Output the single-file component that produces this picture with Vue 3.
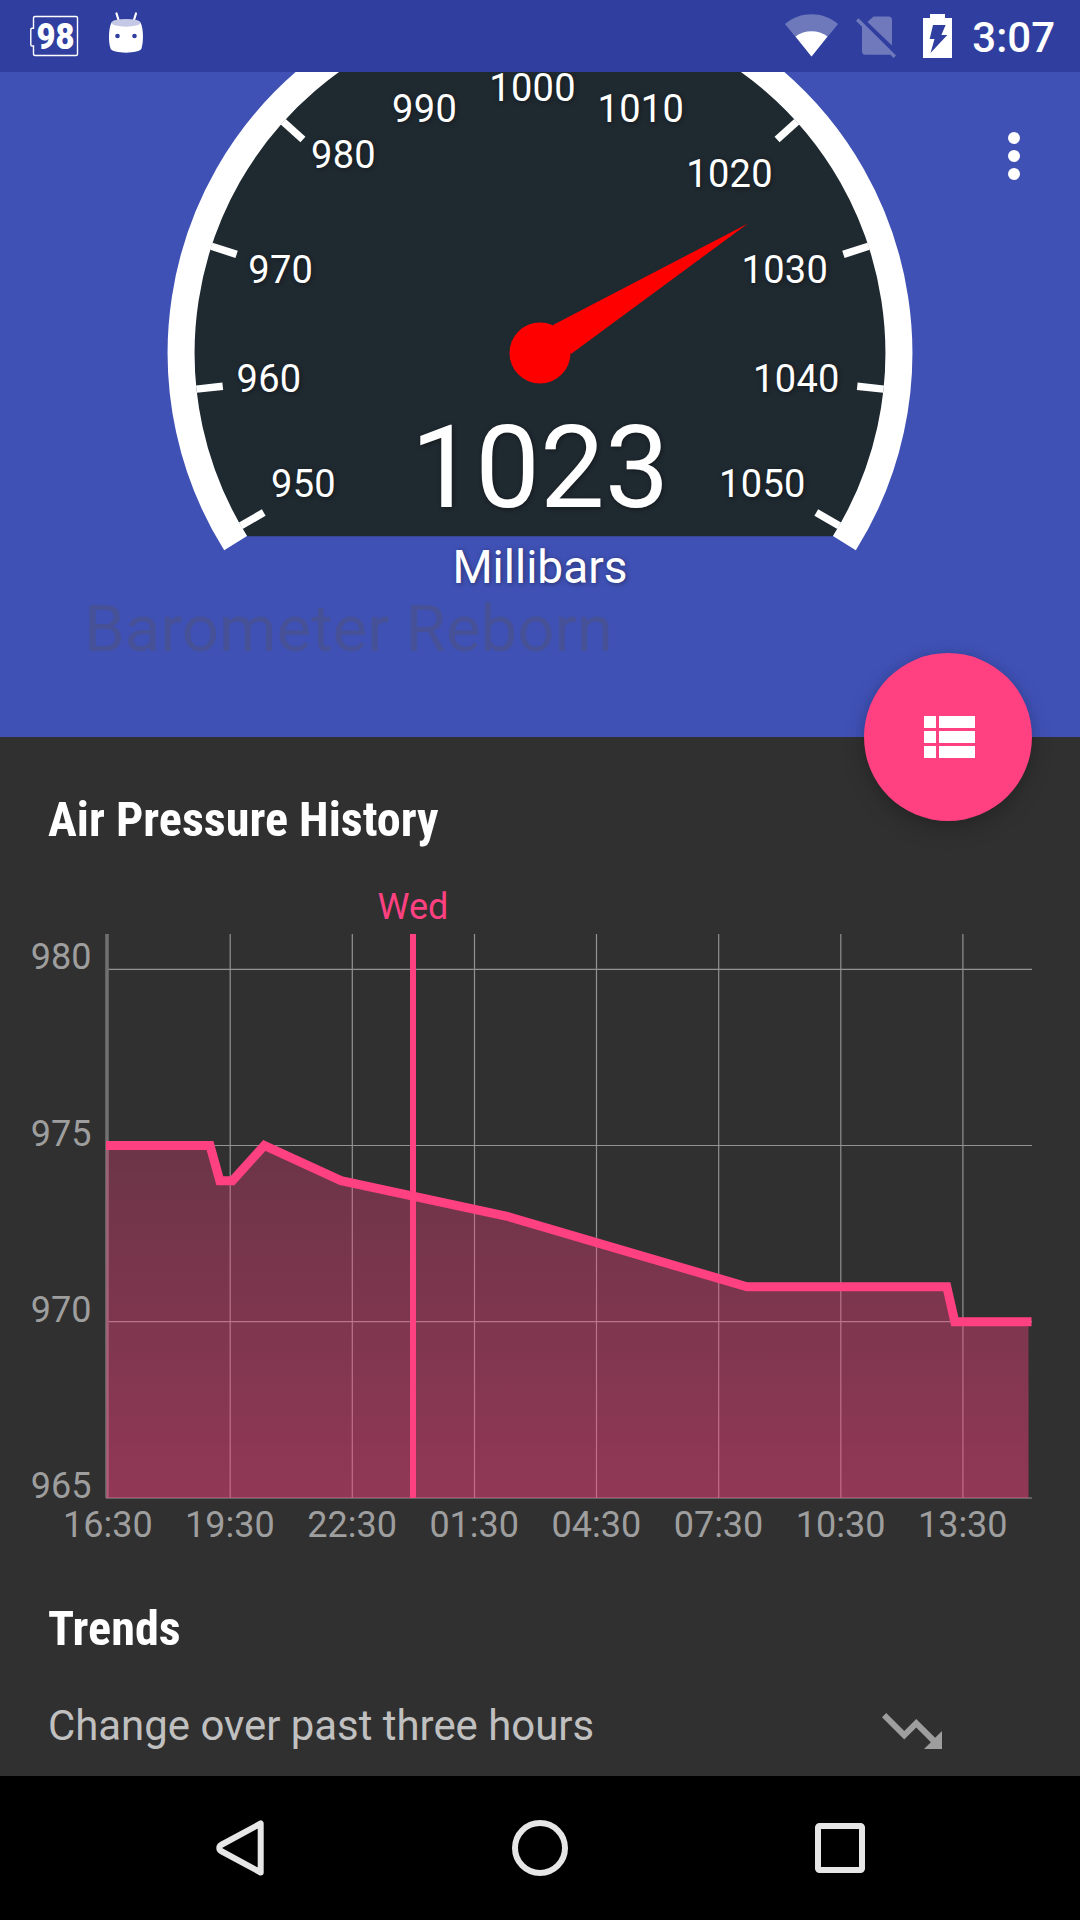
<template>
  <div class="screen">
    <header class="status-bar">
      <div class="status-left">
        <svg class="battery-count" width="52" height="44" viewBox="29 14 52 44">
          <path d="M35 16.5h41a1.5 1.5 0 0 1 1.500 1.500v36a1.500 1.500 0 0 1-1.500 1.500h-41a1.500 1.500 0 0 1-1.500-1.500v-8h-1.500a1.200 1.200 0 0 1-1.200-1.200v-15.300a1.200 1.200 0 0 1 1.200-1.200h1.500v-10.300a1.500 1.500 0 0 1 1.500-1.500z" />
          <text x="55.5" y="49" text-anchor="middle" textLength="38" lengthAdjust="spacingAndGlyphs">98</text>
        </svg>
        <svg width="36" height="44" viewBox="108 11 36 44">
          <path d="M116.500 13.500l2.500 8M136 13.500l-2.500 8" stroke="#fff" stroke-width="2.200" stroke-linecap="round" />
          <path d="M111.500 22.500c-3 6-3.300 19-1 26 1.500 5.500 29.500 5.500 31 0 2.300-7 2-20-1-26z" fill="#fff" />
          <ellipse cx="126" cy="22.800" rx="14.500" ry="3.900" fill="#c5c9e6" />
          <circle cx="117.500" cy="36" r="2.300" fill="#303f9f" />
          <circle cx="134.500" cy="36" r="2.300" fill="#303f9f" />
        </svg>
      </div>
      <div class="status-right">
        <svg width="170" height="60" viewBox="784 6 170 60">
          <path d="M811.500 56.500L785 24c15-13 38-13 53 0z" fill="#fff" opacity=".3" />
          <path d="M811.500 56.500L795.500 36.500c9-7 23-7 32 0z" fill="#fff" />
          <g fill="#fff" opacity=".3">
            <path d="M867.500 22l6-5.500H888.500a3.500 3.500 0 0 1 3.500 3.500V45.500z" />
            <path d="M858.500 18.300l37.500 37.200-2.400 2.400-3.200-3.200H865.500a3.500 3.500 0 0 1-3.500-3.500V26.800l-6-6z" />
          </g>
          <path
            d="M930 14h15v4h7v40h-29v-40h7zM933 25l-3.300 14h4.800L930.500 53 947.300 35h-5.900l4.200-10z"
            fill="#fff"
            fill-rule="evenodd"
          />
        </svg>
        <span class="clock">3:07</span>
      </div>
    </header>

    <section class="app-header">
      <svg class="gauge" width="1080" height="665" viewBox="0 72 1080 665">
        <path :d="dialPath" fill="#1f2930" />
        <path :d="ringPath" fill="none" stroke="#fff" stroke-width="27" />
        <line
          v-for="t in ticks"
          :key="t.angle"
          :x1="t.x1" :y1="t.y1" :x2="t.x2" :y2="t.y2"
          stroke="#fff"
          stroke-width="7.500"
        />
        <text v-for="l in labels" :key="l.text" class="tick-label" :x="l.x" :y="l.y">{{ l.text }}</text>
        <polygon points="553,325 748,223.500 571,354" fill="#f00" />
        <circle cx="540" cy="353" r="30.500" fill="#f00" />
        <text class="reading" x="540" y="507">1023</text>
        <text class="unit" x="540" y="583">Millibars</text>
        <text class="app-title" x="84" y="651">Barometer Reborn</text>
      </svg>
      <button class="overflow" aria-label="More options">
        <i></i><i></i><i></i>
      </button>
      <button class="fab" aria-label="List">
        <svg width="51" height="42" viewBox="0 0 51 42">
          <path d="M0 0h12v12H0zM15 0h36v12H15zM0 15h12v12H0zM15 15h36v12H15zM0 30h12v12H0zM15 30h36v12H15z" fill="#fff" />
        </svg>
      </button>
    </section>

    <main class="content">
      <h2>Air Pressure History</h2>
      <svg class="chart" width="1080" height="700" viewBox="0 870 1080 700">
        <defs>
          <linearGradient id="area" gradientUnits="userSpaceOnUse" x1="0" y1="934" x2="0" y2="1498">
            <stop offset="0" stop-color="#ff4081" stop-opacity=".18" />
            <stop offset="1" stop-color="#ff4081" stop-opacity=".47" />
          </linearGradient>
        </defs>
        <g stroke="#929292" stroke-width="1.200">
          <line v-for="x in gridX" :key="x" :x1="x" :x2="x" y1="934" y2="1498" />
          <line v-for="y in gridY" :key="y.label" x1="106" x2="1032" :y1="y.pos" :y2="y.pos" />
        </g>
        <line x1="107" x2="107" y1="934" y2="1498" stroke="#707070" stroke-width="3.600" />
        <polygon :points="`106.500,1498 ${line} 1028.500,1321.700 1028.500,1498`" fill="url(#area)" />
        <line x1="413" x2="413" y1="934" y2="1498" stroke="#ff4081" stroke-width="6" />
        <polyline :points="`${line} 1031.500,1321.700`" fill="none" stroke="#ff4081" stroke-width="9" />
        <text class="day" x="413" y="919">Wed</text>
        <text v-for="y in gridY" :key="y.label" class="axis end" x="91.5" :y="y.base">{{ y.label }}</text>
        <text v-for="(t, i) in times" :key="t" class="axis mid" :x="107.8 + i * 122.14" y="1537">{{ t }}</text>
      </svg>
      <h2>Trends</h2>
      <div class="trend-row">
        <span>Change over past three hours</span>
        <svg width="72" height="72" viewBox="0 0 24 24">
          <path d="M16 18l2.290-2.290-4.880-4.880-4 4L2 7.410 3.410 6l6 6 4-4 6.300 6.290L22 12v6z" fill="#9e9e9e" />
        </svg>
      </div>
    </main>

    <nav class="nav-bar">
      <svg width="60" height="60" viewBox="0 0 60 60">
        <path d="M50.700 5.500v49L11 33a3.500 3.500 0 0 1 0-6z" />
      </svg>
      <svg width="60" height="60" viewBox="0 0 60 60">
        <circle cx="30" cy="30" r="25" />
      </svg>
      <svg width="60" height="60" viewBox="0 0 60 60">
        <rect x="8" y="8" width="44" height="44" rx="1.500" />
      </svg>
    </nav>
  </div>
</template>

<script setup>
const cx = 540
const cy = 353

function polar(r, deg) {
  const a = (deg * Math.PI) / 180
  return [cx + r * Math.cos(a), cy + r * Math.sin(a)]
}

// dial opens downwards, leaving out the bottom 116 degrees
function arc(r) {
  return `M${polar(r, 148).join(' ')}A${r} ${r} 0 1 1 ${polar(r, 32).join(' ')}`
}

const dialPath = arc(346) + 'z'
const ringPath = arc(358.9)

const ticks = Array.from({ length: 11 }, (_, i) => {
  const angle = 150 + i * 24
  const [x1, y1] = polar(319, angle)
  const [x2, y2] = polar(345.5, angle)
  return { angle, x1, y1, x2, y2 }
})

const labels = [
  { text: '950', x: 303.5, y: 497 },
  { text: '960', x: 269, y: 392 },
  { text: '970', x: 280.8, y: 283 },
  { text: '980', x: 343.5, y: 168 },
  { text: '990', x: 424.6, y: 122 },
  { text: '1000', x: 532.6, y: 100.5 },
  { text: '1010', x: 640.8, y: 122 },
  { text: '1020', x: 729.6, y: 187 },
  { text: '1030', x: 784.8, y: 283 },
  { text: '1040', x: 796.4, y: 392 },
  { text: '1050', x: 762.4, y: 497 }
]

const times = ['16:30', '19:30', '22:30', '01:30', '04:30', '07:30', '10:30', '13:30']
const gridX = [230.2, 352.3, 474.5, 596.5, 718.7, 840.8, 962.9]
const gridY = [
  { label: '980', pos: 969.4, base: 969 },
  { label: '975', pos: 1145.5, base: 1146 },
  { label: '970', pos: 1321.7, base: 1321.5 },
  { label: '965', pos: 1498, base: 1498 }
]

const line = '106,1145.5 210,1145.5 219.8,1180.7 232.4,1180.7 264.3,1145.5 341,1180.7 506,1216 747,1286.8 946.8,1286.8 954.8,1321.7'
</script>

<style>
body {
  margin: 0;
  background: #303030;
}
</style>

<style scoped>
.screen {
  width: 1080px;
  height: 1920px;
  display: flex;
  flex-direction: column;
  overflow: hidden;
  background: #303030;
  font-family: Roboto, "Noto Sans", sans-serif;
}
.screen svg {
  display: block;
  flex: none;
}

.status-bar {
  height: 72px;
  flex: none;
  display: flex;
  justify-content: space-between;
  align-items: center;
  padding: 0 25px 0 29px;
  background: #303f9f;
  position: relative;
  z-index: 1;
}
.status-left {
  display: flex;
  gap: 27px;
  margin-top: -3px;
}
.status-left svg:first-child {
  margin-top: 3px;
}
.battery-count path {
  fill: none;
  stroke: #fff;
  stroke-width: 1.400;
}
.battery-count text {
  font-size: 36px;
  font-weight: 900;
  fill: #fff;
}
.status-right {
  display: flex;
  align-items: center;
  gap: 18px;
}
.clock {
  font-size: 42px;
  font-weight: 500;
  line-height: 60px;
  padding-top: 3px;
  color: #fff;
}

.app-header {
  height: 665px;
  flex: none;
  background: #3f51b5;
  position: relative;
}
.gauge {
  overflow: visible;
}
.gauge text {
  fill: #fff;
  text-anchor: middle;
  text-shadow: 1px 1px 5px rgba(0, 0, 0, 0.4);
}
.gauge .tick-label {
  font-size: 38px;
  letter-spacing: 0.3px;
}
.gauge .reading {
  font-size: 115px;
}
.gauge .unit {
  font-size: 46px;
}
.gauge .app-title {
  font-size: 65.4px;
  text-anchor: start;
  text-shadow: none;
  fill: #465197;
}

button {
  border: none;
  padding: 0;
}
.overflow {
  position: absolute;
  top: 60px;
  right: 60px;
  display: flex;
  flex-direction: column;
  gap: 6px;
  background: none;
}
.overflow i {
  width: 12px;
  height: 12px;
  border-radius: 50%;
  background: #fff;
}
.fab {
  position: absolute;
  right: 48px;
  bottom: -84px;
  width: 168px;
  height: 168px;
  border-radius: 50%;
  display: flex;
  align-items: center;
  justify-content: center;
  padding-left: 3px;
  background: #ff4081;
  box-shadow: 0 8px 22px rgba(0, 0, 0, 0.18), 0 0 10px rgba(0, 0, 0, 0.1);
}

.content {
  height: 1039px;
  flex: none;
  display: flex;
  flex-direction: column;
  color: #fff;
}
h2 {
  align-self: flex-start;
  margin: 55px 0 0 48px;
  font-family: "Roboto Condensed", Roboto, sans-serif;
  font-size: 48.2px;
  font-stretch: condensed;
  font-weight: 700;
  line-height: 56px;
  white-space: nowrap;
}
.chart {
  margin-top: 22px;
}
.chart + h2 {
  margin-top: 31px;
}
.chart text {
  font-size: 36px;
}
.chart .day {
  fill: #ff4081;
  text-anchor: middle;
}
.axis {
  fill: #9e9e9e;
}
.axis.end {
  text-anchor: end;
}
.axis.mid {
  text-anchor: middle;
}
.trend-row {
  display: flex;
  justify-content: space-between;
  align-items: center;
  height: 72px;
  margin-top: 38px;
  padding: 0 132px 0 48px;
  font-size: 41.9px;
  color: #c0c0c0;
}
.trend-row span {
  margin-top: -12px;
}

.nav-bar {
  height: 144px;
  flex: none;
  display: flex;
  justify-content: center;
  align-items: center;
  gap: 240px;
  background: #000;
}
.nav-bar svg {
  fill: none;
  stroke: #e6e6e6;
  stroke-width: 6;
  stroke-linejoin: round;
}
</style>
